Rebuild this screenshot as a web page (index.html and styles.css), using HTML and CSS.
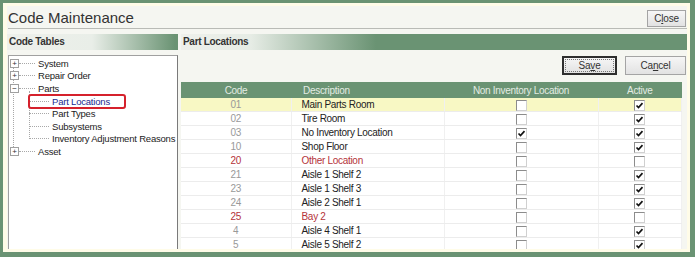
FILE: index.html
```html
<!DOCTYPE html>
<html lang="en">
<head>
    <meta charset="UTF-8">
    <title>Code Maintenance</title>
    <link rel="stylesheet" href="styles.css">
</head>
<body>
    <div class="window">
        <div class="content">
            <div class="titlebar">
                <h1>Code Maintenance</h1>
                <button class="btn btn-close">C<u>l</u>ose</button>
            </div>

            <div class="main">
                <div class="left">
                    <div class="bar bar-left">Code Tables</div>
                    <div class="tree">
                        <div class="node"><span class="exp">+</span><span class="line"></span><span class="label">System</span></div>
                        <div class="node"><span class="exp">+</span><span class="line"></span><span class="label">Repair Order</span></div>
                        <div class="node"><span class="exp">&minus;</span><span class="line"></span><span class="label">Parts</span></div>
                        <div class="children">
                            <div class="leaf selected"><span class="line"></span><span class="label">Part Locations</span></div>
                            <div class="leaf"><span class="line"></span><span class="label">Part Types</span></div>
                            <div class="leaf"><span class="line"></span><span class="label">Subsystems</span></div>
                            <div class="leaf"><span class="line"></span><span class="label">Inventory Adjustment Reasons</span></div>
                        </div>
                        <div class="node"><span class="exp">+</span><span class="line"></span><span class="label">Asset</span></div>
                    </div>
                </div>

                <div class="right">
                    <div class="bar bar-right">Part Locations</div>
                    <div class="toolbar">
                        <button class="btn btn-default"><span>Sa<u>v</u>e</span></button>
                        <button class="btn">Ca<u>n</u>cel</button>
                    </div>
                    <div class="grid">
                        <table>
                            <thead>
                                <tr>
                                    <th class="c-code">Code</th>
                                    <th class="c-desc">Description</th>
                                    <th class="c-chk">Non Inventory Location</th>
                                    <th class="c-act">Active</th>
                                </tr>
                            </thead>
                            <tbody id="rows"></tbody>
                        </table>
                    </div>
                </div>
            </div>
        </div>
    </div>

    <script>
        const rows = [
            { code: '01', desc: 'Main Parts Room', nonInv: false, active: true, current: true },
            { code: '02', desc: 'Tire Room', nonInv: false, active: true },
            { code: '03', desc: 'No Inventory Location', nonInv: true, active: true },
            { code: '10', desc: 'Shop Floor', nonInv: false, active: true },
            { code: '20', desc: 'Other Location', nonInv: false, active: false },
            { code: '21', desc: 'Aisle 1 Shelf 2', nonInv: false, active: true },
            { code: '23', desc: 'Aisle 1 Shelf 3', nonInv: false, active: true },
            { code: '24', desc: 'Aisle 2 Shelf 1', nonInv: false, active: true },
            { code: '25', desc: 'Bay 2', nonInv: false, active: false },
            { code: '4', desc: 'Aisle 4 Shelf 1', nonInv: false, active: true },
            { code: '5', desc: 'Aisle 5 Shelf 2', nonInv: false, active: true }
        ];

        const tick = '<svg viewBox="0 0 9 9" width="9" height="9"><path d="M1.5 4.5 L3.5 6.5 L7.5 2.2" fill="none" stroke="#111" stroke-width="1.7"/></svg>';

        function box(checked) {
            return `<span class="chk">${checked ? tick : ''}</span>`;
        }

        const body = document.getElementById('rows');
        rows.forEach(r => {
            const tr = document.createElement('tr');
            if (r.current) tr.className = 'current';
            if (!r.active) tr.classList.add('inactive');
            tr.innerHTML = `
                <td class="c-code">${r.code}</td>
                <td class="c-desc">${r.desc}</td>
                <td class="c-chk">${box(r.nonInv)}</td>
                <td class="c-act">${box(r.active)}</td>
            `;
            body.appendChild(tr);
        });
    </script>
</body>
</html>
```

FILE: styles.css
```css
body {
    margin: 0;
    background: #6a9373;
    font-family: 'Liberation Sans', Arial, sans-serif;
    font-size: 10px;
    letter-spacing: -0.3px;
    color: #222;
}
.window {
    margin: 3px 5px 5px 3px;
    height: 249px;
    box-sizing: border-box;
    padding: 3px 3px 3px 4px;
    background: #fffce8;
    overflow: hidden;
}
.content {
    height: 100%;
    background: #f5f6f1;
    display: flex;
    flex-direction: column;
    overflow: hidden;
}
.titlebar {
    display: flex;
    align-items: center;
    justify-content: space-between;
    height: 22px;
    margin: 0 0 0 1px;
    border-bottom: 1px solid #b9bbb6;
}
h1 {
    margin: 0;
    font-size: 15px;
    font-weight: normal;
    letter-spacing: 0;
    color: #333;
}
.btn {
    font-family: inherit;
    font-size: 10px;
    letter-spacing: -0.2px;
    color: #333;
    background: linear-gradient(#f6f6f6, #e2e2e2);
    border: 1px solid #a4a4a4;
    padding: 0;
    cursor: pointer;
}
.btn-close {
    width: 39px;
    height: 17px;
    margin-right: 1px;
    margin-top: 3px;
}
.main {
    display: flex;
    gap: 3px;
    margin-top: 5px;
    flex: 1;
    min-height: 0;
}
.left {
    width: 171px;
    display: flex;
    flex-direction: column;
}
.right {
    flex: 1;
    display: flex;
    flex-direction: column;
    min-width: 0;
}
.bar {
    height: 16px;
    line-height: 16px;
    padding-left: 2px;
    font-weight: bold;
    color: #333;
}
.bar-left {
    background: linear-gradient(to right, #eef0eb 0px, #e9eee8 85px, #6a9373 168px);
}
.bar-right {
    background: linear-gradient(to right, #eef0eb 0px, #e6ece5 70px, #6a9373 195px);
}
.tree {
    flex: 1;
    margin: 5px 0 0 1px;
    background: #fff repeating-linear-gradient(to bottom, #a8a8a8 0 1px, transparent 1px 2px) no-repeat 4px 8px / 1px 88px;
    border-top: 1px solid #a0a0a0;
    border-left: 1px solid #a0a0a0;
    border-right: 1px solid #7a7a7a;
    padding-top: 1px;
    white-space: nowrap;
    overflow: hidden;
    font-size: 9.5px;
    letter-spacing: -0.2px;
}
.node, .leaf {
    display: flex;
    align-items: center;
    height: 12.6px;
    color: #1c1c1c;
}
.exp {
    flex-shrink: 0;
    width: 7px;
    height: 7px;
    margin-left: 1px;
    border: 1px solid #a0a0a0;
    background: #fff;
    font-size: 8px;
    letter-spacing: 0;
    line-height: 7px;
    text-align: center;
    color: #333;
}
.line {
    flex-shrink: 0;
    width: 16px;
    border-bottom: 1px dotted #a8a8a8;
    margin-right: 3px;
}
.children {
    position: relative;
    margin-left: 20px;
}
.children::before {
    content: '';
    position: absolute;
    left: 0;
    top: -4px;
    bottom: 6px;
    border-left: 1px dotted #a8a8a8;
}
.leaf .line {
    width: 20px;
}
.leaf.selected .label {
    color: #1a2a90;
}
.leaf.selected {
    position: relative;
}
.leaf.selected::after {
    content: '';
    position: absolute;
    left: -1px;
    top: -1px;
    width: 94px;
    height: 11px;
    border: 2px solid #d5212c;
    border-radius: 3px;
}
.toolbar {
    height: 32px;
    display: flex;
    justify-content: flex-end;
    align-items: flex-start;
    gap: 8px;
    padding: 6px 1px 0 0;
    box-sizing: border-box;
}
.toolbar .btn {
    width: 61px;
    height: 19px;
}
.btn-default {
    border: 2px solid #2e2e2e;
    padding: 1px;
}
.btn-default span {
    display: block;
    height: 100%;
    border: 1px dotted #777;
    box-sizing: border-box;
    line-height: 11px;
}
.toolbar .btn-default {
    width: 55px;
}
.grid {
    width: 501px;
    flex: 1;
    overflow: hidden;
}
table {
    width: 100%;
    border-collapse: collapse;
    table-layout: fixed;
}
th {
    background: #6a9373;
    color: #e3ece3;
    font-weight: normal;
    height: 16px;
    padding: 0;
}
td {
    height: 13px;
    padding: 0;
    border-bottom: 1px solid #ececec;
    border-right: 1px solid #f0f0f0;
    line-height: 13px;
    background: #fff;
}
tr.current td {
    background: #f8f8c4;
}
.c-code {
    width: 110px;
    text-align: center;
}
td.c-code {
    color: #999;
}
.c-desc {
    width: 153px;
    text-align: left;
    padding-left: 10px;
    box-sizing: border-box;
}
th.c-desc {
    padding-left: 12px;
}
.c-chk {
    width: 154px;
    text-align: center;
}
.c-act {
    text-align: center;
}
tr.inactive td.c-code,
tr.inactive td.c-desc {
    color: #b4333a;
}
.chk {
    display: inline-block;
    width: 9px;
    height: 9px;
    vertical-align: middle;
    border: 1px solid #8c8c8c;
    border-right-color: #d0d0d0;
    border-bottom-color: #d0d0d0;
    background: #fff;
    line-height: 0;
}
```
